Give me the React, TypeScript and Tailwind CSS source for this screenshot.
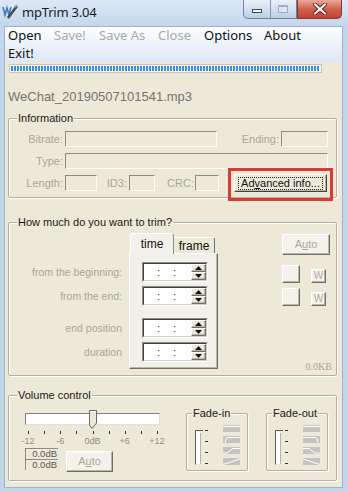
import * as React from "react"

type Kids = { className?: string; children?: React.ReactNode }

function Sunken({ className = "", children }: Kids) {
  return (
    <div className={`border border-t-[#8d8b82] border-l-[#8d8b82] border-r-[#fdfdfb] border-b-[#fdfdfb] ${className}`}>
      {children}
    </div>
  )
}

function Raised({ className = "", children }: Kids) {
  return (
    <div className={`flex items-center justify-center border border-t-white border-l-white border-r-[#716f64] border-b-[#716f64] shadow-[inset_-1px_-1px_0_#b9b6a8] ${className}`}>
      {children}
    </div>
  )
}

function Group({ label, className = "", labelLeft = "left-[8px]", children }: Kids & { label: string; labelLeft?: string }) {
  return (
    <div className={`relative shrink-0 rounded-[2px] border border-[#b2b0a4] shadow-[inset_1px_1px_0_#fff,1px_1px_0_#fff] ${className}`}>
      <span className={`absolute -top-[8px] ${labelLeft} bg-[#ece9d8] px-[1px] text-[11px] leading-[14px] text-[#1a1a1a]`}>
        {label}
      </span>
      {children}
    </div>
  )
}

function Label({ w, children }: { w: string; children: React.ReactNode }) {
  return <span className={`${w} shrink-0 text-right text-[11px] leading-[16px] text-[#a8a69b]`}>{children}</span>
}

function Tri({ down }: { down?: boolean }) {
  return (
    <svg width="7" height="4" viewBox="0 0 7 4">
      <path d={down ? "M0 0 L7 0 L3.5 4 Z" : "M0 4 L7 4 L3.5 0 Z"} fill="#111" />
    </svg>
  )
}

function Spin({ className = "" }: { className?: string }) {
  return (
    <div className={`flex h-[20px] w-[66px] border border-t-[#8d8b82] border-l-[#8d8b82] border-r-white border-b-white ${className}`}>
      <div className="flex flex-1 border border-t-[#404040] border-l-[#404040] border-r-[#d4d0c8] border-b-[#d4d0c8] bg-white">
        <div className="flex flex-1 items-center pl-[13px] text-[11px] leading-[14px] text-[#222]">
          <span>:</span>
          <span className="ml-[13px]">:</span>
        </div>
        <div className="flex w-[15px] flex-col">
          <Raised className="h-[8px] bg-[#ece9d8]"><Tri /></Raised>
          <Raised className="h-[8px] bg-[#ece9d8]"><Tri down /></Raised>
        </div>
      </div>
    </div>
  )
}

function FadeSlider() {
  return (
    <svg width="14" height="36" viewBox="0 0 14 36" className="ml-[7px] mt-[15px] shrink-0">
      <rect x="2" y="2" width="4" height="33" fill="#fff" />
      <path d="M1.5 35.5 V1.5 H9" stroke="#5a5a5a" fill="none" />
      <path d="M6.5 4 V35" stroke="#b5b3a8" fill="none" />
      <rect x="11" y="1" width="3" height="1" fill="#333" />
      <rect x="11" y="12" width="3" height="1" fill="#333" />
      <rect x="11" y="23" width="3" height="1" fill="#333" />
      <rect x="11" y="34" width="3" height="1" fill="#333" />
    </svg>
  )
}

function Curve({ points }: { points: string }) {
  return (
    <svg width="17" height="7" viewBox="0 0 17 7">
      <rect width="17" height="7" fill="#c4c3bd" />
      <polyline points={points} stroke="#fff" fill="none" strokeWidth="1" />
    </svg>
  )
}

function Fade({ label, curves, className = "" }: { label: string; curves: string[]; className?: string }) {
  return (
    <Group label={label} labelLeft="left-[5px]" className={`mt-[17px] h-[58px] w-[62px] ${className}`}>
      <div className="flex">
        <FadeSlider />
        <div className="ml-auto mr-[7px] mt-[11px] flex flex-col gap-[4px]">
          {curves.map((c) => (
            <Curve key={c} points={c} />
          ))}
        </div>
      </div>
    </Group>
  )
}

const fadeIn = ["0,1.5 17,1.5", "2,7 3,2.5 5,1.5 17,1.5", "0,6 4,6 10,1.5 17,1.5", "0,6.5 17,1"]
const fadeOut = ["0,1.5 17,1.5", "0,1.5 12,1.5 14,2.5 15,7", "0,1.5 6,1.5 12,6 17,6", "0,1 17,6.5"]

function TitleBar() {
  return (
    <div className="flex h-[26px] shrink-0 bg-linear-to-b from-[#dce8f6] to-[#c4d7ed]">
      <svg width="16" height="16" viewBox="0 0 16 16" className="ml-[2px] mt-[3px]">
        <path d="M1 4 L3 12 L5 5 L7 12 L9 4" stroke="#3f78cc" strokeWidth="1.6" fill="none" />
        <path d="M6 15 L15 3" stroke="#4a4a4a" strokeWidth="2.6" />
        <path d="M13 4 L15 2" stroke="#9aa" strokeWidth="2" />
      </svg>
      <span className="ml-[4px] mt-[4px] font-['Noto_Sans',sans-serif] text-[13px] leading-[16px] tracking-[-0.2px] text-[#1b1b1b]">
        mpTrim 3.04
      </span>
      <div className="ml-auto mr-[6px] flex h-[19px]">
        <div className="flex w-[54px] overflow-hidden rounded-bl-[5px] border border-t-0 border-[#71819a] bg-linear-to-b from-[#eaf0f8] to-[#bccfe6]">
          <div className="flex flex-1 items-center justify-center border-r border-[#8797ad]">
            <div className="mt-[3px] h-[4px] w-[10px] border border-[#3b4656] bg-white" />
          </div>
          <div className="flex flex-1 items-center justify-center">
            <div className="h-[8px] w-[10px] border border-[#9fb0c6] border-t-2 bg-[#dde6f2]" />
          </div>
        </div>
        <div className="flex w-[45px] items-center justify-center rounded-br-[5px] border border-t-0 border-[#7d3a32] bg-linear-to-b from-[#e8a89c] via-[#d1604e] to-[#c3432f]">
          <svg width="14" height="12" viewBox="0 0 14 12">
            <path d="M2 1.5 L12 10.5 M12 1.5 L2 10.5" stroke="#5a1f18" strokeWidth="4" strokeLinecap="round" />
            <path d="M2 1.5 L12 10.5 M12 1.5 L2 10.5" stroke="#fff" strokeWidth="2.2" strokeLinecap="round" />
          </svg>
        </div>
      </div>
    </div>
  )
}

function Menu() {
  return (
    <div className="flex h-[35px] shrink-0 flex-col bg-linear-to-b from-[#fdfeff] to-[#dde7f4] pl-[3px] font-['Noto_Sans',sans-serif] text-[13px] leading-[17px] text-[#111]">
      <div className="flex h-[17px] items-center">
        <span className="w-[46px]">Open</span>
        <span className="w-[45px] text-[#a9a9a9]">Save!</span>
        <span className="w-[59px] text-[#a9a9a9]">Save As</span>
        <span className="w-[46px] text-[#a9a9a9]">Close</span>
        <span className="w-[60px]">Options</span>
        <span>About</span>
      </div>
      <div className="flex h-[18px] items-center">
        <span>Exit!</span>
      </div>
    </div>
  )
}

export default function App() {
  return (
    <div className="flex h-[492px] w-[348px] flex-col overflow-hidden bg-[#c3d6ec] font-['Liberation_Sans',Arial,sans-serif]">
      <TitleBar />
      <div className="mb-[4px] ml-[4px] mr-[5px] flex flex-1 flex-col border border-[#9fb1c7] bg-[#ece9d8]">
        <Menu />
        <div className="flex flex-1 flex-col">
          <div className="ml-[4px] mt-[2px] h-[9px] w-[313px] border border-[#c9c7bb] bg-[#f4f3ee] p-[1px]">
            <div className="h-full w-full bg-[repeating-linear-gradient(90deg,#3c8ce0_0px,#3c8ce0_2px,transparent_2px,transparent_3px)]" />
          </div>

          <div className="ml-[3px] mt-[16px] h-[16px] text-[13px] leading-[16px] text-[#747474]">WeChat_20190507101541.mp3</div>

          <Group label="Information" className="ml-[3px] mt-[13px] h-[80px] w-[329px]">
            <div className="flex flex-col gap-[6px] pt-[12px]">
              <div className="flex h-[16px] items-center">
                <Label w="w-[54px]">Bitrate:</Label>
                <Sunken className="ml-[2px] h-[16px] w-[152px]" />
                <Label w="w-[62px]">Ending:</Label>
                <Sunken className="ml-[2px] h-[16px] w-[47px]" />
              </div>
              <div className="flex h-[16px] items-center">
                <Label w="w-[54px]">Type:</Label>
                <Sunken className="ml-[2px] h-[16px] w-[263px]" />
              </div>
              <div className="flex h-[16px] items-center">
                <Label w="w-[54px]">Length:</Label>
                <Sunken className="ml-[2px] h-[16px] w-[32px]" />
                <Label w="w-[30px]">ID3:</Label>
                <Sunken className="ml-[2px] h-[16px] w-[26px]" />
                <Label w="w-[39px]">CRC:</Label>
                <Sunken className="ml-[1px] h-[16px] w-[24px]" />
                <Raised className="ml-[15px] h-[18px] w-[93px] border-r-[#404040] border-b-[#404040] bg-[#ece9d8]">
                  <span className="border border-dotted border-[#222] px-[2px] text-[11px] leading-[11px] text-[#111]">
                    Ad<span className="underline">v</span>anced info...
                  </span>
                </Raised>
              </div>
            </div>
            <div className="absolute left-[219px] top-[49px] h-[33px] w-[105px] border-[3px] border-[#dc3b34]" />
          </Group>

          <Group label="How much do you want to trim?" className="ml-[3px] mt-[24px] h-[154px] w-[329px]">
            <div className="flex h-full pt-[10px]">
              <div className="flex w-[113px] flex-col pt-[29px] text-right text-[10.5px] leading-[20px] text-[#a8a69b]">
                <div className="h-[20px]">from the beginning:</div>
                <div className="mt-[4px] h-[20px]">from the end:</div>
                <div className="mt-[12px] h-[20px]">end position</div>
                <div className="mt-[4px] h-[20px]">duration</div>
              </div>
              <div className="ml-[7px] flex w-[89px] flex-col">
                <div className="flex h-[20px] items-end text-[12px] text-[#111]">
                  <div className="relative z-10 -mb-[1px] ml-[1px] flex h-[21px] w-[44px] items-center justify-center rounded-t-[3px] border border-b-0 border-t-white border-l-white border-r-[#8d8b82] bg-[#f1f0ea]">
                    time
                  </div>
                  <div className="flex h-[16px] w-[41px] items-center justify-center rounded-tr-[3px] border border-b-0 border-l-0 border-t-white border-r-[#716f64] bg-[#ece9d8]">
                    frame
                  </div>
                </div>
                <div className="flex h-[116px] flex-col border border-t-white border-l-white border-r-[#716f64] border-b-[#716f64] bg-[#f1f0ea] pl-[12px] pt-[8px] shadow-[inset_-1px_-1px_0_#b9b6a8]">
                  <Spin />
                  <Spin className="mt-[4px]" />
                  <Spin className="mt-[12px]" />
                  <Spin className="mt-[4px]" />
                </div>
              </div>
              <div className="ml-[64px] flex w-[52px] flex-col pb-[3px]">
                <Raised className="mt-[1px] h-[21px] w-[48px] bg-[#f3f2ed] text-[11px] text-[#aca899]">
                  <span>
                    A<span className="underline">u</span>to
                  </span>
                </Raised>
                <div className="mt-[10px] flex items-end">
                  <Raised className="h-[18px] w-[18px] bg-[#f3f2ed]" />
                  <Raised className="ml-[11px] h-[14px] w-[15px] bg-[#f3f2ed] text-[10px] leading-[10px] text-[#aca899]">W</Raised>
                </div>
                <div className="mt-[5px] flex items-end">
                  <Raised className="h-[18px] w-[18px] bg-[#f3f2ed]" />
                  <Raised className="ml-[11px] h-[14px] w-[15px] bg-[#f3f2ed] text-[10px] leading-[10px] text-[#aca899]">W</Raised>
                </div>
                <span className="mt-auto self-end pr-[2px] font-['Liberation_Serif',serif] text-[10px] leading-[10px] text-[#a8a69b]">0.0KB</span>
              </div>
            </div>
          </Group>

          <Group label="Volume control" className="ml-[3px] mt-[19px] h-[86px] w-[329px]">
            <div className="flex h-full">
              <div className="flex w-[177px] shrink-0 flex-col pl-[16px] pt-[17px]">
                <div className="relative h-[12px] w-[135px] border border-t-[#808080] border-l-[#808080] border-r-[#e4e2d8] border-b-[#e4e2d8] bg-white">
                  <svg width="8" height="19" viewBox="0 0 8 19" className="absolute -top-[4px] left-[63px]">
                    <path d="M0.5 0.5 H7.5 V13 L3 18.5 L0.5 15 Z" fill="#ece9d8" stroke="#6d6b62" />
                    <path d="M1.5 1.5 H6.5" stroke="#fff" />
                  </svg>
                </div>
                <div className="ml-[3px] mt-[6px] flex h-[3px] w-[130px] justify-between">
                  {Array.from({ length: 9 }).map((_, i) => (
                    <span key={i} className="h-[3px] w-px bg-[#333]" />
                  ))}
                </div>
                <div className="-ml-[9px] mt-[2px] flex w-[153px] justify-between text-[9px] leading-[10px] text-[#8f8d85]">
                  <span className="w-[24px] text-center">-12</span>
                  <span className="w-[24px] text-center">-6</span>
                  <span className="w-[24px] text-center">0dB</span>
                  <span className="w-[24px] text-center">+6</span>
                  <span className="w-[24px] text-center">+12</span>
                </div>
                <div className="mt-[2px] flex">
                  <div className="flex w-[33px] flex-col">
                    <div className="h-[11px] border-l border-t border-[#8d8b82] pr-[1px] text-right text-[9.5px] leading-[10px] text-[#555]">0.0dB</div>
                    <div className="h-[11px] border-l border-t border-[#8d8b82] pr-[1px] text-right text-[9.5px] leading-[10px] text-[#555]">0.0dB</div>
                  </div>
                  <Raised className="ml-[8px] mt-[3px] h-[21px] w-[47px] bg-[#f3f2ed] text-[11px] text-[#aca899]">
                    <span>
                      A<span className="underline">u</span>to
                    </span>
                  </Raised>
                </div>
              </div>
              <Fade label="Fade-in" curves={fadeIn} />
              <Fade label="Fade-out" curves={fadeOut} className="ml-[18px]" />
            </div>
          </Group>
        </div>
      </div>
    </div>
  )
}
